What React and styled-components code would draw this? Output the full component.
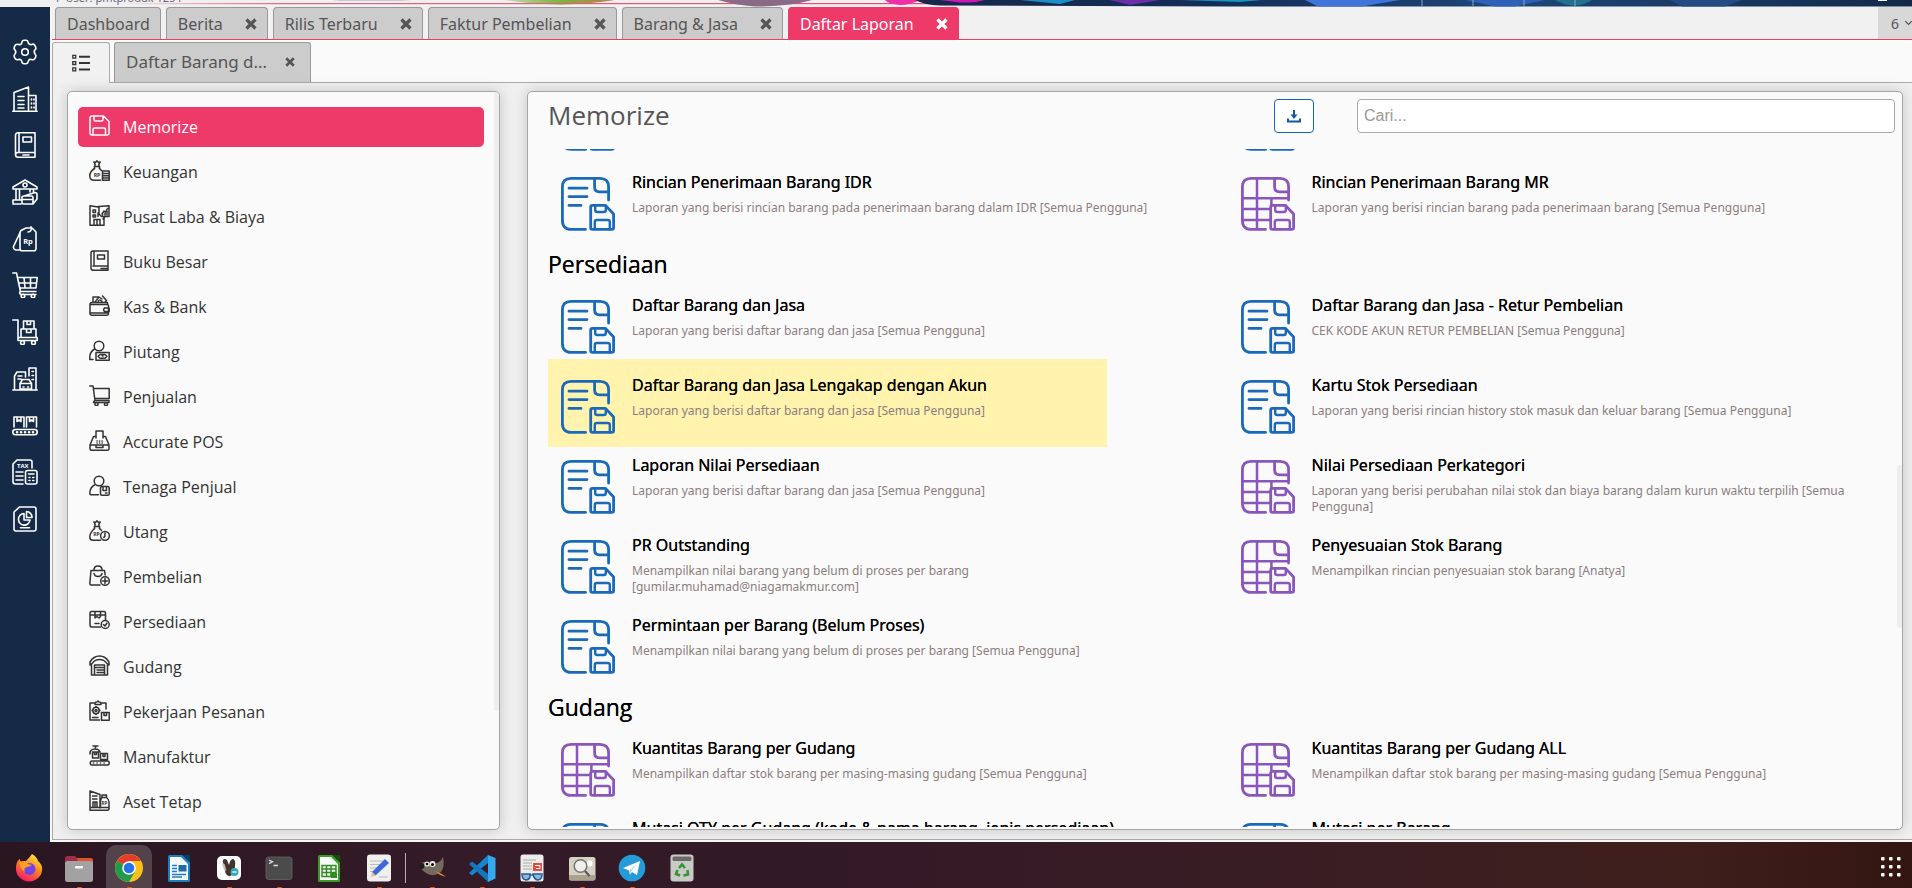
import React from 'react';
import styled, { createGlobalStyle, css } from 'styled-components';

const GlobalStyle = createGlobalStyle`
  *, *::before, *::after { box-sizing: border-box; }
  html, body { margin: 0; padding: 0; }
  body {
    background: #f1f1f1;
    font-family: "Noto Sans", "Open Sans", sans-serif;
    font-size: 16px;
    color: #333;
    overflow: hidden;
  }
  button { font: inherit; color: inherit; background: none; border: 0; padding: 0; margin: 0; cursor: pointer; }
  svg { display: block; }
`;

/* ---------- shell ---------- */

const Desktop = styled.div`
  display: flex;
  flex-direction: column;
  height: 100vh;
`;

const Banner = styled.header`
  display: flex;
  position: relative;
  flex: none;
  height: 7px;
  overflow: hidden;
  background: #f0f0f0;
`;

const BannerArt = styled.svg`
  position: absolute;
  inset: 0;
  width: 100%;
  height: 100%;
`;

const BannerUser = styled.span`
  position: relative;
  align-self: flex-end;
  flex: none;
  margin: 0 0 3px 56px;
  font-size: 11px;
  line-height: 12px;
  color: #667;
`;

const Workspace = styled.div`
  display: flex;
  flex: 1;
  min-height: 0;
`;

const Sidebar = styled.nav`
  flex: none;
  width: 50px;
  padding-top: 32px;
  background: #152a47;
  color: #fff;
`;

const SidebarList = styled.div`
  display: flex;
  flex-direction: column;
  align-items: center;
  justify-content: space-between;
  height: 493px;
`;

const SidebarButton = styled.button`
  width: 26px;
  height: 26px;
  flex: none;
`;

const Main = styled.main`
  display: flex;
  flex-direction: column;
  flex: 1;
  min-width: 0;
  padding: 0 0 2px 2px;
  background: #f7f7f7;
`;

/* ---------- tabs ---------- */

const TabBar = styled.div`
  display: flex;
  flex: none;
  gap: 5px;
  height: 33px;
  padding-left: 3px;
  background: #f1f1f1;
  border-bottom: 1px solid #ee3a69;
`;

const Tab = styled.div`
  display: flex;
  align-items: center;
  gap: 22px;
  padding: 0 10px 0 11px;
  background: #ccc;
  border: 1px solid #999;
  border-bottom: 0;
  border-radius: 4px 4px 0 0;
  color: #555;
  ${(p) => p.$active && css`
    background: #ee3a69;
    border-color: #ee3a69;
    color: #fff;
  `}
`;

const TabLabel = styled.button`
  white-space: nowrap;
  line-height: 22px;
`;

const TabCount = styled.button`
  display: flex;
  align-items: center;
  justify-content: flex-start;
  gap: 6px;
  width: 34px;
  margin-left: auto;
  padding-left: 13px;
  overflow: hidden;
  background: #d8d8d8;
  color: #555;
  font-size: 14px;
`;

const SubTabBar = styled.div`
  display: flex;
  flex: none;
  height: 43px;
  padding-top: 2px;
  background: #fafafa;
`;

const ListTab = styled.button`
  display: flex;
  align-items: center;
  justify-content: center;
  flex: none;
  width: 58px;
  background: #f1f1f1;
  border: 1px solid #aaa;
  border-bottom: 0;
  border-radius: 3px 3px 0 0;
`;

const SubTabRest = styled.div`
  display: flex;
  flex: 1;
  padding-left: 4px;
  border-bottom: 1px solid #aaa;
`;

const SubTab = styled.div`
  display: flex;
  align-items: center;
  gap: 18px;
  padding: 0 15px 2px 11px;
  background: #ccc;
  border: 1px solid #999;
  border-bottom: 0;
  border-radius: 3px 3px 0 0;
  color: #555;
  font-size: 17px;
`;

/* ---------- content ---------- */

const Content = styled.div`
  display: flex;
  flex: 1;
  min-height: 0;
  gap: 27px;
  padding: 8px 9px 9px 14px;
  background: #f0f0f0;
  border: 1px solid #aaa;
  border-width: 0 0 1px 1px;
`;

const panel = css`
  background: #fafafa;
  border: 1px solid #a4a6a4;
  border-radius: 5px;
  box-shadow: 0 0 14px rgba(0, 0, 0, 0.18);
  overflow: hidden;
`;

const MenuPanel = styled.aside`
  ${panel}
  display: flex;
  flex: none;
  width: 433px;
`;

const MenuList = styled.ul`
  display: flex;
  flex-direction: column;
  gap: 5px;
  flex: 1;
  margin: 0;
  padding: 15px 10px 0;
  list-style: none;
`;

const MenuItem = styled.button`
  display: flex;
  align-items: center;
  gap: 13px;
  width: 100%;
  height: 40px;
  padding-left: 11px;
  border-radius: 5px;
  text-align: left;
  font-family: "Open Sans", "Noto Sans", sans-serif;
  color: #333;
  ${(p) => p.$active && css`
    background: #ee3a69;
    color: #fff;
  `}
`;

const MenuIcon = styled.span`
  width: 21px;
  height: 25px;
`;

const ScrollTrack = styled.div`
  flex: none;
  display: flex;
  flex-direction: column;
  width: 5px;
`;

const ScrollThumb = styled.div`
  flex: 0 0 ${(p) => p.$size}%;
  margin-top: ${(p) => p.$top || 0}px;
  background: #eee;
  border-radius: 3px;
`;

const ReportPanel = styled.section`
  ${panel}
  display: flex;
  flex-direction: column;
  flex: 1;
  min-width: 0;
`;

const ReportHeader = styled.div`
  display: flex;
  align-items: center;
  flex: none;
  height: 50px;
  padding: 0 7px 2px 20px;
`;

const ReportTitle = styled.h1`
  flex: 1;
  margin: 0;
  padding-bottom: 2px;
  font-family: "Open Sans", "Noto Sans", sans-serif;
  font-size: 26px;
  line-height: 32px;
  font-weight: 400;
  color: #555;
`;

const DownloadButton = styled.button`
  display: flex;
  align-items: center;
  justify-content: center;
  width: 40px;
  height: 34px;
  margin-right: 43px;
  background: #fff;
  border: 1px solid #1566b7;
  border-radius: 4px;
  color: #1259a5;
`;

const SearchInput = styled.input`
  width: 40%;
  max-width: 538px;
  height: 34px;
  padding: 0 6px;
  background: #fff;
  border: 1px solid #a9a9a9;
  border-radius: 4px;
  font-family: "Liberation Sans", Arial, sans-serif;
  font-size: 16px;
  color: #333;
  &::placeholder { color: #999; opacity: 1; }
`;

const ReportBody = styled.div`
  display: flex;
  flex: 1;
  min-height: 0;
  margin: 7px 0 2px;
`;

const ReportScroll = styled.div`
  flex: 1;
  overflow: hidden;
  padding: 0 6px 0 20px;
`;

const ReportList = styled.div`
  margin-top: -73px;
`;

const SectionTitle = styled.h2`
  height: 43px;
  margin: 0;
  padding-top: 12px;
  font-family: "Open Sans", "Noto Sans", sans-serif;
  font-size: 23px;
  line-height: 32px;
  font-weight: 400;
  color: #000;
  text-shadow: 0 0 0 #000;
`;

const ReportGrid = styled.div`
  display: grid;
  grid-template-columns: repeat(2, minmax(0, 1fr));
  grid-auto-rows: 80px;
  column-gap: 16px;
`;

const ReportItem = styled.a`
  display: flex;
  justify-self: start;
  gap: 17px;
  min-width: min(559px, 100%);
  max-width: 100%;
  height: 88px;
  padding: 13px 13px 0;
  text-decoration: none;
  background: ${(p) => (p.$highlight ? '#fff3ae' : 'transparent')};
`;

const ReportIconBox = styled.span`
  flex: none;
  padding-top: 8px;
`;

const ReportText = styled.span`
  flex: 1;
`;

const ReportName = styled.span`
  display: block;
  font-size: 16px;
  line-height: 26px;
  color: #000;
  text-shadow: 0 0 0 #000;
  white-space: nowrap;
`;

const ReportDesc = styled.span`
  display: block;
  padding-top: 5px;
  font-size: 12px;
  line-height: 16px;
  color: #8c7e7e;
`;

/* ---------- taskbar ---------- */

const Taskbar = styled.footer`
  display: flex;
  flex: none;
  height: 46px;
  padding: 0 6px 0 4px;
  background: linear-gradient(90deg, #2a1620 0%, #341b28 25%, #311926 40%, #391d25 65%, #3f1f1c 88%, #331512 100%);
`;

const TaskButton = styled.button`
  display: flex;
  flex-direction: column;
  align-items: center;
  justify-content: space-between;
  flex: none;
  width: 46px;
  margin: 3px 2px 0;
  padding-top: 8px;
  border-radius: 10px 10px 0 0;
  background: ${(p) => (p.$active ? '#54424b' : 'transparent')};
  &::after {
    content: "";
    width: 5px;
    height: 1px;
    border-radius: 2px 2px 0 0;
    background: ${(p) => (p.$running ? '#e95420' : 'transparent')};
  }
`;

const TaskDivider = styled.span`
  width: 1px;
  height: 30px;
  margin: 11px 1px 0;
  background: #b9afb4;
`;

const AppsButton = styled.button`
  margin-left: auto;
  width: 30px;
  display: flex;
  align-items: center;
  justify-content: center;
  padding-top: 4px;
`;

/* ---------- drawings ---------- */

const Close = ({ size = 12 }) => (
  <svg width={size} height={size} viewBox="0 0 12 12" stroke="currentColor" strokeWidth="3.2" fill="none">
    <path d="M1.5 1.5 10.5 10.5M10.5 1.5 1.5 10.5" />
  </svg>
);

const ReportIcon = ({ purple }) => (
  <svg width="54" height="54" viewBox="0 0 54 54" fill="none" stroke={purple ? '#8a56bb' : '#1b69b9'} strokeWidth="2.8" strokeLinecap="round" strokeLinejoin="round">
    <path d="M24.5 52.4H10Q1.4 52.4 1.4 43V10Q1.4 1.4 10 1.4H39Q47.6 1.4 47.6 10V23" />
    <path d="M33.6 2V10Q33.6 14.8 38.5 14.8H47" />
    {purple ? (
      <path d="M16 1.4V52M1.4 21.2H47M1.4 32H29M1.4 43H29M30.4 21.2V28" strokeWidth="2.500" />
    ) : (
      <path d="M8 11.2H26M8 19.6H26M8 28.4H20" />
    )}
    <path d="M31.4 28.4H44.5L52.6 37V50.5Q52.6 52.4 50.7 52.4H31.6Q29.7 52.4 29.7 50.5V30.2Q29.7 28.4 31.4 28.4Z" />
    <path d="M34.2 29V33Q34.2 35 36.2 35H42.8Q44.8 35 44.8 33V29M33.8 52V45Q33.8 43 35.8 43H46.8Q48.8 43 48.8 45V52" strokeWidth="2.400" />
  </svg>
);

const Line = ({ size, children, box = size, w = 1.6 }) => (
  <svg width={size} height={size} viewBox={`0 0 ${box} ${box}`} fill="none" stroke="currentColor" strokeWidth={w} strokeLinecap="round" strokeLinejoin="round">
    {children}
  </svg>
);

const RpText = ({ x, y, s = 5.5, children = 'Rp' }) => (
  <text x={x} y={y} fontSize={s} fontWeight="700" fill="currentColor" stroke="none" textAnchor="middle" fontFamily="Open Sans, sans-serif">{children}</text>
);

const sidebarItems = [
  ['Pengaturan', <><path d="M10 2.8Q10.4 1.3 12 1.3H14Q15.600 1.300 16 2.800L16.600 4.700Q18 6 19.500 5.500Q21.600 4.600 22.700 6.300L23.700 8Q24.500 9.700 23 10.900Q21.400 12.500 23 15Q24.600 16.300 23.700 18L22.600 19.800Q21.600 21.300 19.500 20.500Q17.500 20 16.600 21.400L16 23.200Q15.500 24.700 14 24.700H12Q10.400 24.700 10 23.200L9.400 21.300Q8.200 20 6.300 20.500Q4.500 21.300 3.400 19.800L2.300 18Q1.500 16.400 3 15Q4.600 13 3 10.900Q1.500 9.700 2.300 8L3.300 6.200Q4.500 4.700 6.300 5.500Q8.500 6 9.400 4.700Z" /><circle cx="13" cy="13" r="3.300" /></>],
  ['Perusahaan', <path d="M.8 25.200H25.200M2 25V6.500L16.500 1V25M16.500 9.500H24V25M6 10.500H12M6 14.500H12M6 18.500H12M6 22H12M19.500 13V14M22 13V14M19.500 17V18M22 17V18M19.500 21V22M22 21V22" />],
  ['Buku Besar', <path d="M23 20.500V.8H6Q3.500 .8 3.500 3.500V22.500Q3.500 25.200 6 25.200H23V20.500H6Q3.500 20.500 3.500 23M7 1V20M11 5H19.500V10H11ZM11 23H17" />],
  ['Kas & Bank', <><path d="M1 8 13 1 25 8V10H1ZM4 10V21M7.500 10V21M21.500 10V13M18 10V13M1 21H9M1 25H9M1 21V25M12 17 23 13.500Q25 13.500 25 15.500V20L21 25H11.500Q10 25 10 23.500V18.500Q10 17 12 17H20Q21 17 21 19V25M10 20.500H21" /><circle cx="13" cy="6" r="2" /></>],
  ['Penjualan', <><path d="M9 4.500 14 2H20L24 6V22.500Q24 24.800 22 24.800H10Q8 24.800 8 22.500V6ZM9 4.500 1.500 20.500Q1 23 3.500 24H8.500M16 6Q20 6 19 .8" /><RpText x="16" y="17.500" s="7.500" /></>],
  ['Pembelian', <><path d="M.8 1H4.500L8.500 19.500H24M5.500 5.500H25.200L24 16H8M6.500 11H24.500M12 5.500 13 16M18.500 5.500V16M8.500 19.500Q6.500 21 9 22.500H24" /><circle cx="11" cy="24" r="1.800" /><circle cx="21" cy="24" r="1.800" /></>],
  ['Persediaan', <><path d="M.8 1H6V21.500H25M9 18.500V10H24V18.500ZM11.500 10V2H22V10M15 2V5.500H18.500V2M14.500 10V13.500H19V10M7 18.500H25.200V21.500" /><circle cx="10.500" cy="23.700" r="1.900" /><circle cx="21.500" cy="23.700" r="1.900" /></>],
  ['Aset Tetap', <path d="M.8 24H25.200M2.500 24V10L5 6H13.500V11M17 10V2H24V24M6 10H10M6 13H9M20 5.500H21.500M20 9.500H21.500M20 13.500H21.500M8 23V17.500L10.500 13.500H17L19.500 17.500V23H8M8 17.500H19.500M11 21H12M15.500 21H16.500" />],
  ['Manufaktur', <><path d="M2 14V4H12V14M14.500 14V4H24.500V14M5 4V8.500L7 7 9 8.500V4M17.500 4V8.500L19.500 7 21.500 8.500V4M3.500 16.500H22.500Q25.200 16.500 25.200 19Q25.200 21.800 22.500 21.800H3.500Q.8 21.800 .8 19Q.8 16.500 3.500 16.500Z" /><path d="M5 19.200H5.100M9 19.200H9.100M13 19.200H13.100M17 19.200H17.100M21 19.200H21.100" strokeWidth="2.600" /></>],
  ['Pajak', <><path d="M20 9V3Q20 1 18 1H5L1 5V22.500Q1 25 3.500 25H11M4 13H11M4 17H11M4 21H11M15.500 11.500H23Q25 11.500 25 13.500V23Q25 25 23 25H15.500Q13.500 25 13.500 23V13.500Q13.500 11.500 15.500 11.500ZM16.500 15H22M17 18.500H18M20.800 18.500H21.800M17 21.500H18M20.800 21.500H21.800" /><RpText x="10.800" y="9.200" s="6">TAX</RpText></>],
  ['Laporan', <path d="M7.500 1H22Q24 1 24 3V23Q24 25 22 25H4Q2 25 2 23V6ZM12 7.500A5.800 5.800 0 1 0 18 14H12ZM14.500 5.500V11.500H20A5.800 5.800 0 0 0 14.500 5.500M8.500 21.800H17.500" />],
];

const coinBag = <path d="M5.500 6.500H10.500L9.800 4.500 11.200 2 9.500 2.500 8 .8 6.500 2.500 4.800 2 6.200 4.500ZM5.500 6.500V8.500M10.500 6.500V8.500" />;
const person = <circle cx="10" cy="6" r="4.800" />;

const menuItems = [
  ['Memorize', <path d="M1 3Q1 1 3 1H14.500L20 6.500V18Q20 20 18 20H3Q1 20 1 18ZM5 1V4.500Q5 6 6.500 6H12.500Q14 6 14 4.500V1M4 20V14.500Q4 13 5.500 13H15Q16.500 13 16.500 14.500V20" />],
  ['Keuangan', <>{coinBag}<path d="M5.500 8.500Q.8 11.500 .8 16Q.8 20.200 5 20.200H11.500M10.500 8.500 12.500 10.500M13.500 11H20.200V20.200H13.500ZM13.500 13.500H20M13.500 15.700H20M13.500 18H20" /><RpText x="8" y="16.500" s="5.200">RP</RpText></>],
  ['Pusat Laba & Biaya', <path d="M1 20.200V.8L9 2V1.500H10M1 20.200H15V13M4 5H6.500V7.500H4ZM4 10H6.500V12H4ZM9 8V11.500M5 20V14.500H11V20M8 14.500V20M10 1.500 20 .8V11.500H12.500L10 9ZM13 9 15 6 16.500 7 18.500 3.500M16 11.500 14 14M13.500 9V10M16 8V10M18 6V10" />],
  ['Buku Besar', <path d="M19 16V1H4Q2 1 2 3V18Q2 20.200 4 20.200H19V16H4M5 1V16M8.500 5H15.500V9H8.500ZM12 18.500H19" />],
  ['Kas & Bank', <path d="M1 9.500H18Q19.500 9.500 19.500 11V18.500Q19.500 20.200 18 20.200H3Q1 20.200 1 18.500ZM1 9.500Q1 7.500 3 7.500H18.500V9M4 7V2H10M6 7 10 2 13 4M13.500 1 17.500 5.500 16 7M9 7Q10 3.500 13 6.500M15.500 13H20.200V16.500H15.500Q13.800 14.800 15.500 13M1 18H18.500" />],
  ['Piutang', <>{person}<path d="M5.500 9Q.8 12 .8 17V19.500H4M7 12.500H20.200V20.200H7ZM9 16.300 11 14.500H16L18 16.300 16 18.200H11ZM13.300 16H14" /></>],
  ['Penjualan', <><path d="M.8 1H4L6 15.500H18.500M5 3.500H20.200V13.500H6M5.500 15.500H20V17.500H4.500Z" /><circle cx="7.500" cy="19" r="1.600" /><circle cx="17" cy="19" r="1.600" /></>],
  ['Accurate POS', <path d="M1 15H20V19Q20 20.200 18.500 20.200H2.500Q1 20.200 1 19ZM1 15 4.500 6.500H7M14 6.500H16.500L20 15M7 8V1H14V8M7 15V17.500H14V15M8 11H8.200M10.500 11H10.700M13 11H13.200M8 13H8.200M10.500 13H10.700M13 13H13.200" />],
  ['Tenaga Penjual', <>{person}<path d="M5.500 10Q1 12.500 .8 18Q.8 19.800 2.500 19.800H9.500M13 11.500H18.700Q20.200 11.500 20.200 13V18.700Q20.200 20.200 18.700 20.200H13Q11.500 20.200 11.500 18.700V13Q11.500 11.500 13 11.500ZM14 11.500V15.500H17.500V11.500M16.500 18H18" /></>],
  ['Utang', <>{coinBag}<path d="M5.500 8.500Q.8 13 .8 17Q.8 20.200 4 20.200H11.500M10.500 8.500 12.500 10.500M16 13V16L14.800 17.500" /><circle cx="16" cy="15.800" r="4.400" /><RpText x="7.500" y="15.500" s="5.200">RP</RpText></>],
  ['Pembelian', <><path d="M11 20H2Q.8 20 .8 18.500L2 5.500H15.500L16.200 10M4.800 5.500Q5 1 9 1Q13 1 13.200 5.500M5 8.500Q5.500 11.500 9 11.500Q12.500 11.500 13 8.500M16 13.500V18.500M13.500 16H18.500" /><circle cx="16" cy="16" r="4.300" /></>],
  ['Persediaan', <><path d="M11.500 17H2.500Q1 17 1 15.500V3Q1 1.500 2.500 1.500H15Q16.500 1.500 16.500 3V10M1 5H16.500M6 1.500V8L8 6.500 10 8 11.500 6.500V1.500M6 13.500H10M14.500 14.500 16 16 18 13" /><circle cx="16.200" cy="14.500" r="4" /></>],
  ['Gudang', <path d="M1 10V7Q4.500 1 10.500 1Q16.500 1 20 7V10L17.500 8Q15 4.500 10.500 4.500Q6 4.500 3.500 8ZM2.500 9.500V20H18.500V9.500M5.500 20V10H15.500V20M5.500 12.500H15.500M8 15H15.500M8 17.500H15.500" />],
  ['Pekerjaan Pesanan', <><path d="M10.500 20H1V3H6V4.500H12V3H17V9M6 3Q6.500 2 8 2Q9 -.2 10 2Q12 2 12 3M12.500 12.500H20.200V20.200H12.500ZM15 12.500V15.500H17.500V12.500M3.500 17.500H9" /><circle cx="7" cy="10.500" r="3.200" /><circle cx="7" cy="10.500" r="1" /><path d="M7 6.500V7M7 14V14.500M3 10.500H3.500M10.500 10.500H11" /></>],
  ['Manufaktur', <path d="M4 1H9M6.500 1V4M1 7Q2 4 6.500 4Q10 4 11 7M1 7V9M3.500 7H9.500V13H3.500ZM5.500 7V9.500H7.500V7M11.500 8.500H18.500V14.500H11.500ZM14 8.500V11.500H16V8.500M3 16H18.500Q20.200 16 20.200 18Q20.200 20 18.500 20H3Q1.300 20 1.300 18Q1.300 16 3 16ZM4.500 18H4.700M8 18H8.200M11.500 18H11.700M15 18H15.200" />],
  ['Aset Tetap', <><path d="M1 20V1L11 4.500V18M3.500 6H8M3.500 9H8M4 17.500V12H8V17.500M6 12V17.500M1 17.500H20V19Q20 20.200 18.500 20.200H1M13 7.500H17.500V5H13ZM13 7.500Q11.500 9 11.500 12V17M17.500 7.500Q20 9.500 20 12V17" /><RpText x="15.500" y="15" s="4.500">RP</RpText></>],
];

const tabs = [
  { label: 'Dashboard', plain: true },
  { label: 'Berita' },
  { label: 'Rilis Terbaru' },
  { label: 'Faktur Pembelian' },
  { label: 'Barang & Jasa' },
  { label: 'Daftar Laporan', active: true },
];

const sections = [
  {
    items: [
      { name: '', desc: '' },
      { name: '', desc: '' },
      { name: 'Rincian Penerimaan Barang IDR', desc: 'Laporan yang berisi rincian barang pada penerimaan barang dalam IDR [Semua Pengguna]' },
      { name: 'Rincian Penerimaan Barang MR', desc: 'Laporan yang berisi rincian barang pada penerimaan barang [Semua Pengguna]', purple: true },
    ],
  },
  {
    title: 'Persediaan',
    items: [
      { name: 'Daftar Barang dan Jasa', desc: 'Laporan yang berisi daftar barang dan jasa [Semua Pengguna]' },
      { name: 'Daftar Barang dan Jasa - Retur Pembelian', desc: 'CEK KODE AKUN RETUR PEMBELIAN [Semua Pengguna]' },
      { name: 'Daftar Barang dan Jasa Lengakap dengan Akun', desc: 'Laporan yang berisi daftar barang dan jasa [Semua Pengguna]', highlight: true },
      { name: 'Kartu Stok Persediaan', desc: 'Laporan yang berisi rincian history stok masuk dan keluar barang [Semua Pengguna]' },
      { name: 'Laporan Nilai Persediaan', desc: 'Laporan yang berisi daftar barang dan jasa [Semua Pengguna]' },
      { name: 'Nilai Persediaan Perkategori', desc: 'Laporan yang berisi perubahan nilai stok dan biaya barang dalam kurun waktu terpilih [Semua Pengguna]', purple: true },
      { name: 'PR Outstanding', desc: 'Menampilkan nilai barang yang belum di proses per barang [gumilar.muhamad@niagamakmur.com]' },
      { name: 'Penyesuaian Stok Barang', desc: 'Menampilkan rincian penyesuaian stok barang [Anatya]', purple: true },
      { name: 'Permintaan per Barang (Belum Proses)', desc: 'Menampilkan nilai barang yang belum di proses per barang [Semua Pengguna]' },
    ],
  },
  {
    title: 'Gudang',
    items: [
      { name: 'Kuantitas Barang per Gudang', desc: 'Menampilkan daftar stok barang per masing-masing gudang [Semua Pengguna]', purple: true },
      { name: 'Kuantitas Barang per Gudang ALL', desc: 'Menampilkan daftar stok barang per masing-masing gudang [Semua Pengguna]', purple: true },
      { name: 'Mutasi QTY per Gudang (kode & nama barang, jenis persediaan)', desc: '' },
      { name: 'Mutasi per Barang', desc: '' },
    ],
  },
];

const AppArt = ({ children }) => <svg width="28" height="30" viewBox="0 0 28 30">{children}</svg>;

const apps = [
  { name: 'Firefox', art: <><defs><linearGradient id="ff" x1="0.800" y1="0" x2="0.300" y2="1"><stop offset="0" stopColor="#fff14a" /><stop offset=".45" stopColor="#ff8a1c" /><stop offset="1" stopColor="#f5156c" /></linearGradient></defs><path d="M17 1Q22 4 23 8Q27 11 27.200 16A13.100 12.500 0 0 1 1 16Q.8 9 4.500 6L6 9Q8 7.500 11 8Q15 4 17 1Z" fill="url(#ff)" /><circle cx="14.500" cy="16" r="6" fill="#7542e5" /><path d="M5 9Q9 7 13 11L17 12Q14 14 12 14Q8 15 10 19Q4 15 5 9Z" fill="#ff9f24" /></> },
  { name: 'Files', running: true, art: <><path d="M0 6Q0 3 2.500 3H10L12 5H25.500Q28 5 28 7.500V12H0Z" fill="#a02d4c" /><path d="M12 5H25.500Q28 5 28 7.500V12H14Z" fill="#e0532b" /><rect y="8" width="28" height="21" rx="2.500" fill="#a2a2a2" /><rect x="10" y="13" width="8" height="2.500" rx="1" fill="#fff" /></> },
  { name: 'Chrome', active: true, running: true, art: <><circle cx="14" cy="15" r="14" fill="#fbc116" /><path d="M14 15 1.900 8A14 14 0 0 1 26.100 8H14Z" fill="#e33b2e" /><path d="M14 15 1.900 8A14 14 0 0 0 14 29L20 18.500Z" fill="#229a4b" /><circle cx="14" cy="15" r="6.800" fill="#fff" /><circle cx="14" cy="15" r="5.300" fill="#2374e8" /></> },
  { name: 'Writer', art: <><path d="M3 3.500Q3 2 4.500 2H25V27.500Q25 29 23.500 29H4.500Q3 29 3 27.500Z" fill="#1d7fbb" /><path d="M5 4H16L23 11V27H5Z" fill="#f5fafd" /><path d="M17 2H25V9.500Z" fill="#083d63" /><path d="M7 12.500H12M7 15.500H12M7 18.500H12M7 21.500H21M7 24H17" stroke="#277cb5" strokeWidth="1.300" /><rect x="13.500" y="12" width="8" height="6.500" fill="#1c6ca5" /></> },
  { name: 'DBeaver', running: true, art: <><rect x="2" y="3" width="24" height="24" rx="5" fill="#fff" /><path d="M8 7Q10 5 12 7L14 12Q15 6 18 6Q21 7 20 13Q20 19 17 22Q13 25 10.500 20Q9 16 10 12Q7 10 8 7Z" fill="#42332e" /><path d="M7 10 10 12 11.500 18 9 17Z" fill="#c8b9aa" /><circle cx="19.500" cy="19" r="4" fill="#36a9b7" /><path d="M17.500 19H21.500" stroke="#fff" strokeWidth="1.300" /></> },
  { name: 'Terminal', running: true, art: <><rect x="1" y="4" width="26" height="22.500" rx="2.500" fill="#4b4b4b" stroke="#666" strokeWidth=".8" /><path d="M4 7 7.500 8.800 4 10.600M8.500 12.500H13" stroke="#ddd" strokeWidth="1.300" fill="none" /></> },
  { name: 'Calc', art: <><path d="M3 3.500Q3 2 4.500 2H25V27.500Q25 29 23.500 29H4.500Q3 29 3 27.500Z" fill="#3a9b26" /><path d="M5 4H16L23 11V27H5Z" fill="#f6fbf5" /><path d="M17 2H25V9.500Z" fill="#164c0d" /><path d="M7 12.500H21V23.500H7ZM7 16H21M7 19.500H21M11.500 12.500V23.500M16 12.500V23.500" stroke="#2f8d22" strokeWidth="1.500" fill="none" /><path d="M16 20H22V25H16Z" fill="#2f8d22" /></> },
  { name: 'Text Editor', running: true, art: <><rect x="2" y="1.500" width="24" height="27" rx="3" fill="#efefed" /><path d="M5 8H19M5 11.500H16M5 15H13M5 18.500H10M14 24H23" stroke="#bbb" strokeWidth="1" /><path d="M7 19 20 6 24 10 10.500 22.500Z" fill="#3e68da" /><path d="M7 19 10.500 22.500 6 24Z" fill="#f1b887" /></> },
  { divider: true },
  { name: 'GIMP', running: true, art: <><path d="M1 12Q5 8 9 9L14 11Q22 11 25 4Q27 14 23 19Q16 25 8 20Q2 16 1 12Z" fill="#756b5d" /><circle cx="3.500" cy="13" r="3" fill="#1e1e1e" /><circle cx="9" cy="11" r="2.600" fill="#eee" /><circle cx="14.500" cy="11" r="3" fill="#eee" /><circle cx="9" cy="11" r="1.300" /><circle cx="14.500" cy="11.500" r="1.500" /><path d="M17 18 24 21 28 24 22 22Z" fill="#e68632" /></> },
  { name: 'VS Code', running: true, art: <><path d="M20 2 27.500 5V25.500L20 29Z" fill="#35a8f2" /><path d="M20 2V10L4 22.500 1 20Z" fill="#1684cf" /><path d="M1 11 4 8.500 20 21V29Z" fill="#1477bd" /></> },
  { name: 'Document Viewer', running: true, art: <><rect x="2.500" y="1.500" width="23" height="27" rx="2.500" fill="#ececea" /><path d="M5 7H18M5 10H14M5 13H14M5 16H14" stroke="#aaa" strokeWidth="1.200" /><rect x="15" y="10" width="9" height="8" fill="#e84b42" /><path d="M17 12.500H22V15.500H18" stroke="#fff" fill="none" /><path d="M4 21H12V24Q11 27 8 27Q4 26.500 4 21ZM15 21H24Q24 26.500 20 27Q16 26.500 15 21ZM12 22H15" fill="#8eb7dd" stroke="#235c9b" strokeWidth="1.500" /></> },
  { name: 'Image Viewer', running: true, art: <><rect x="1" y="4" width="26.500" height="23.500" rx="2.500" fill="#d6d1c5" /><path d="M1 22H27.500V25Q27.500 27.500 25 27.500H3.500Q1 27.500 1 25Z" fill="#aaa18f" /><circle cx="21.500" cy="10.500" r="3" fill="#fff" /><circle cx="12.500" cy="13" r="6.300" fill="#efefec" stroke="#77756e" strokeWidth="1.500" /><path d="M17 18 21.500 23" stroke="#555" strokeWidth="2" /></> },
  { name: 'Telegram', running: true, art: <><circle cx="14" cy="15" r="13.300" fill="#279bd7" /><path d="M5 15 22 8 19 22 14 19 12 21.500 11 17.500Z" fill="#fff" /><path d="M11 17.500 19 11 13 18.500 12 21.500Z" fill="#b8d9ec" /></> },
  { name: 'Trash', art: <><rect x="2.500" y="1.500" width="23" height="27" rx="3" fill="#c9c9c6" /><rect x="4.500" y="3.500" width="19" height="4.500" rx="1.500" fill="#6a6a68" /><path d="M11 15 14 11.500 17 15M19.500 17 20 21.500 15.500 22.500M12 22.500 8 21 9.500 17" fill="none" stroke="#2f962d" strokeWidth="2.500" /></> },
];

const BannerDrawing = () => (
  <BannerArt viewBox="0 0 1912 7" preserveAspectRatio="none" aria-hidden="true">
    <defs>
      <linearGradient id="pinkline" x1="0" x2="1"><stop offset="0" stopColor="#ee3a69" stopOpacity="0" /><stop offset=".2" stopColor="#e8667f" /><stop offset="1" stopColor="#ee4a74" /></linearGradient>
      <linearGradient id="navy" x1="0" x2="1"><stop offset="0" stopColor="#17284a" /><stop offset=".3" stopColor="#142d57" /><stop offset=".6" stopColor="#1d4778" /><stop offset="1" stopColor="#14294a" /></linearGradient>
      <linearGradient id="green" x1="0" x2="1"><stop offset="0" stopColor="#c9dcb4" /><stop offset=".5" stopColor="#71b83b" /><stop offset="1" stopColor="#c9774e" /></linearGradient>
    </defs>
    <path d="M332 0H412L400 1H340Z" fill="#c4c8d2" />
    <path d="M505 0H615Q590 4 560 4.500Q525 4 505 0Z" fill="url(#green)" />
    <rect x="120" y="3" width="830" height="1.200" fill="url(#pinkline)" />
    <path d="M718 0H812Q790 6.500 755 6.500Q735 5 718 0Z" fill="#8a6a86" />
    <path d="M885 0H920Q910 5 900 5Q888 4 885 0Z" fill="#ef2fa6" />
    <path d="M915 0H1912V6.500H1230L940 5.500Q925 5 915 0Z" fill="url(#navy)" />
    <path d="M940 0H985Q975 3 960 2.500Z" fill="#cc18b4" />
    <path d="M1020 0H1075L1060 4Z" fill="#1d8fc4" /><path d="M1110 0H1160L1130 5Z" fill="#6c2fa8" /><path d="M1180 0H1262L1240 2Z" fill="#1596bd" />
    <path d="M1305 0H1400L1362 6.500H1318Z" fill="#3f74d8" />
    <path d="M1465 0H1545L1515 6.500H1495Z" fill="#2f60b8" />
    <path d="M1555 0H1592Q1575 11 1555 0Z" fill="#22718f" />
    <path d="M1670 0H1742L1725 6.500H1682Z" fill="#254b84" />
    <path d="M1422 0V6M1473 0V6M1524 0V6M1575 0V6" stroke="#8da4c4" strokeWidth="1" />
    <rect x="1878" y="0" width="9" height="1" fill="#fff" />
  </BannerArt>
);

export default function App() {
  return (
    <Desktop>
      <GlobalStyle />
      <Banner>
        <BannerDrawing />
        <BannerUser>P User: pmtproduk 1254</BannerUser>
      </Banner>
      <Workspace>
        <Sidebar aria-label="Modul">
          <SidebarList>
            {sidebarItems.map(([name, art]) => (
              <SidebarButton key={name} aria-label={name}><Line size={26}>{art}</Line></SidebarButton>
            ))}
          </SidebarList>
        </Sidebar>
        <Main>
          <TabBar>
            {tabs.map((t) => (
              <Tab key={t.label} $active={t.active}>
                <TabLabel>{t.label}</TabLabel>
                {!t.plain && <button aria-label={`Tutup ${t.label}`}><Close /></button>}
              </Tab>
            ))}
            <TabCount aria-label="6 tab">
              6
              <svg width="10" height="6" viewBox="0 0 10 6" fill="none" stroke="currentColor" strokeWidth="1.600"><path d="M.5 .5 5 5 9.500 .5" /></svg>
            </TabCount>
          </TabBar>
          <SubTabBar>
            <ListTab aria-label="Daftar laporan">
              <svg width="18" height="18" viewBox="0 0 18 18" fill="none" stroke="#333">
                <path d="M.8 1.300H3.700V4.200H.8ZM.8 7.600H3.700V10.500H.8ZM.8 13.900H3.700V16.800H.8Z" strokeWidth="1.300" />
                <path d="M7 2.800H18M7 9H18M7 15.400H18" strokeWidth="2" />
              </svg>
            </ListTab>
            <SubTabRest>
              <SubTab>
                <TabLabel>Daftar Barang d…</TabLabel>
                <button aria-label="Tutup Daftar Barang"><Close size={10} /></button>
              </SubTab>
            </SubTabRest>
          </SubTabBar>
          <Content>
            <MenuPanel>
              <MenuList>
                {menuItems.map(([name, art], i) => (
                  <li key={name}>
                    <MenuItem $active={i === 0}>
                      <MenuIcon><Line size={21} w={1.5}>{art}</Line></MenuIcon>
                      {name}
                    </MenuItem>
                  </li>
                ))}
              </MenuList>
              <ScrollTrack><ScrollThumb $size={84} /></ScrollTrack>
            </MenuPanel>
            <ReportPanel>
              <ReportHeader>
                <ReportTitle>Memorize</ReportTitle>
                <DownloadButton aria-label="Unduh">
                  <svg width="14" height="13" viewBox="0 0 14 13" fill="none" stroke="currentColor" strokeWidth="2">
                    <path d="M1 8.500V11.500H13V8.500M7 0V6" /><path d="M3.500 4.500H10.500L7 9Z" fill="currentColor" stroke="none" />
                  </svg>
                </DownloadButton>
                <SearchInput type="text" placeholder="Cari..." aria-label="Cari" />
              </ReportHeader>
              <ReportBody>
                <ReportScroll>
                  <ReportList>
                    {sections.map((s, si) => (
                      <section key={si}>
                        {s.title && <SectionTitle>{s.title}</SectionTitle>}
                        <ReportGrid>
                          {s.items.map((it, i) => (
                            <ReportItem key={i} href="#" $highlight={it.highlight}>
                              <ReportIconBox><ReportIcon purple={it.purple} /></ReportIconBox>
                              <ReportText>
                                <ReportName>{it.name}</ReportName>
                                <ReportDesc>{it.desc}</ReportDesc>
                              </ReportText>
                            </ReportItem>
                          ))}
                        </ReportGrid>
                      </section>
                    ))}
                  </ReportList>
                </ReportScroll>
                <ScrollTrack><ScrollThumb $size={24} $top={316} /></ScrollTrack>
              </ReportBody>
            </ReportPanel>
          </Content>
        </Main>
      </Workspace>
      <Taskbar>
        {apps.map((a, i) => a.divider
          ? <TaskDivider key={i} />
          : <TaskButton key={i} aria-label={a.name} $active={a.active} $running={a.running}><AppArt>{a.art}</AppArt></TaskButton>)}
        <AppsButton aria-label="Semua aplikasi">
          <svg width="20" height="20" viewBox="0 0 20 20" fill="#fff">
            {[0, 8, 16].map((y) => [0, 8, 16].map((x) => <rect key={`${x}${y}`} x={x} y={y} width="3.600" height="3.600" rx="1" />))}
          </svg>
        </AppsButton>
      </Taskbar>
    </Desktop>
  );
}
